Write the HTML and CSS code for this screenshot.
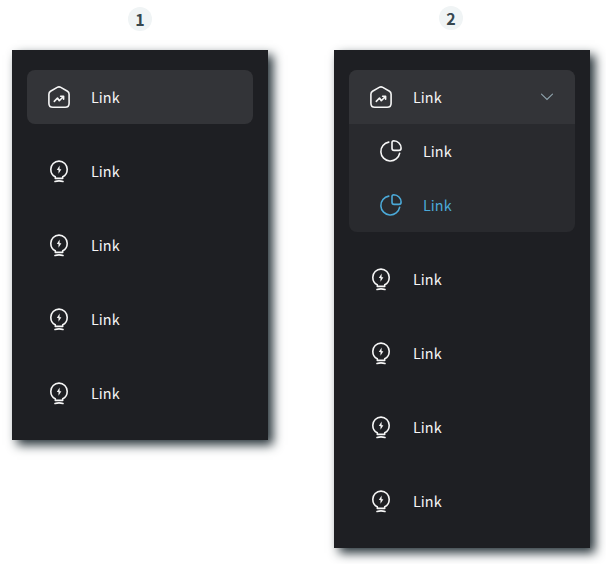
FILE: index.html
```html
<!DOCTYPE html>
<html lang="en">
<head>
<meta charset="utf-8">
<title>Sidebar navigation</title>
<link rel="stylesheet" href="styles.css">
</head>
<body>
<svg class="defs" aria-hidden="true">
  <symbol id="home" viewBox="0 0 24 24">
    <path d="M10.2 2.4 3.5 6.3Q1.9 7.3 1.9 9.3V18.2Q1.9 22.3 5.8 22.3H18.2Q22.1 22.3 22.1 18.2V9.3Q22.1 7.3 20.5 6.3L13.8 2.4Q12 1.3 10.2 2.4Z"/>
    <path d="m7.3 16.4 3.2-3.4 1.8 2.7 4.1-4.2M13.6 11.3h3v2.9"/>
  </symbol>
  <symbol id="bulb" viewBox="0 0 24 24">
    <path d="M8.3 19.4V17.8C5.4 16.5 3.8 13.8 3.8 10.3a8.2 8.2 0 0 1 16.4 0C20.2 13.8 18.6 16.5 15.7 17.8V19.4Z"/>
    <path d="M8 22.5Q12 21.3 16 22.5"/>
    <path class="solid" d="M12.6 6.6 9.8 11.1h1.7v3.7l2.9-4.6h-1.8Z"/>
  </symbol>
  <symbol id="pie" viewBox="0 0 24 24">
    <path d="M9.8 3.1A9.5 9.5 0 1 0 20.7 14.2"/>
    <path d="M13 3.6Q13 1.8 14.8 1.8C19 1.9 22 5.3 22.1 9Q22.1 11.4 19.9 11.4H15.1Q13 11.4 13 9.3Z"/>
  </symbol>
</svg>
<main class="page">
  <section class="example">
    <div class="badge">1</div>
    <nav class="sidebar">
      <a class="item active"><svg class="icon"><use href="#home"/></svg><span>Link</span></a>
      <a class="item"><svg class="icon"><use href="#bulb"/></svg><span>Link</span></a>
      <a class="item"><svg class="icon"><use href="#bulb"/></svg><span>Link</span></a>
      <a class="item"><svg class="icon"><use href="#bulb"/></svg><span>Link</span></a>
      <a class="item"><svg class="icon"><use href="#bulb"/></svg><span>Link</span></a>
    </nav>
  </section>
  <section class="example second">
    <div class="badge">2</div>
    <nav class="sidebar">
      <div class="group">
        <a class="item active"><svg class="icon"><use href="#home"/></svg><span>Link</span><svg class="chevron" viewBox="0 0 14 8"><path d="m1.5 1.2 5.5 5.2 5.5-5.2"/></svg></a>
        <a class="item sub"><svg class="icon"><use href="#pie"/></svg><span>Link</span></a>
        <a class="item sub current"><svg class="icon"><use href="#pie"/></svg><span>Link</span></a>
      </div>
      <a class="item"><svg class="icon"><use href="#bulb"/></svg><span>Link</span></a>
      <a class="item"><svg class="icon"><use href="#bulb"/></svg><span>Link</span></a>
      <a class="item"><svg class="icon"><use href="#bulb"/></svg><span>Link</span></a>
      <a class="item"><svg class="icon"><use href="#bulb"/></svg><span>Link</span></a>
    </nav>
  </section>
</main>
</body>
</html>
```
FILE: styles.css
```css
* { box-sizing: border-box; }
body {
  margin: 0;
  background: #fff;
  font-family: "Noto Sans CJK SC", "Noto Sans", sans-serif;
  overflow: hidden;
}
.defs { display: none; }
.page {
  display: flex;
  align-items: flex-start;
  gap: 66px;
  height: 564px;
  padding: 7px 12px 0;
}
.example { width: 256px; }
.badge {
  width: 24px;
  height: 24px;
  margin: 0 0 19px 116px;
  border-radius: 50%;
  background: #f0f4f5;
  color: #37474f;
  font-size: 16px;
  font-weight: 700;
  line-height: 25px;
  text-align: center;
}
.second .badge { margin: -1px 0 20px 105px; }
.sidebar {
  display: flex;
  flex-direction: column;
  gap: 20px;
  padding: 20px 15px;
  background: #1e1f23;
  box-shadow: 5px 5px 10px #263238;
}
.item {
  display: flex;
  align-items: center;
  gap: 20px;
  height: 54px;
  padding: 0 20px;
  color: #f6f6f6;
  font-size: 14.4px;
  line-height: 24px;
  letter-spacing: 0.05px;
}
.active {
  border-radius: 8px;
  background: #333438;
}
.group {
  overflow: hidden;
  border-radius: 8px;
  background: #292a2e;
}
.group .active { border-radius: 0; }
.sub { padding-left: 29px; gap: 21px; }
.current { color: #4ba9d8; }
.icon {
  width: 24px;
  height: 24px;
  fill: none;
  stroke: currentColor;
  stroke-width: 1.6;
  stroke-linecap: round;
  stroke-linejoin: round;
}
.sub .icon { margin-left: 0.5px; margin-right: -0.5px; }
.solid { fill: currentColor; stroke: none; }
.chevron {
  width: 14px;
  height: 8px;
  margin-left: auto;
  margin-right: 1px;
  fill: none;
  stroke: #90a4ae;
  stroke-width: 1.1;
  stroke-linecap: round;
}
```
